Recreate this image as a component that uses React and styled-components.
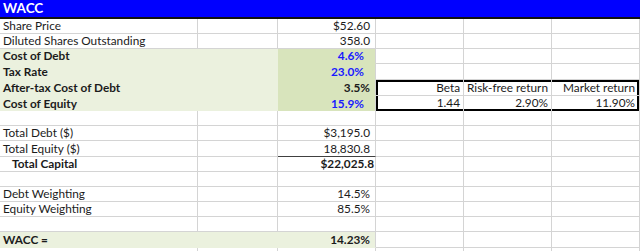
import React from "react";
import styled, { createGlobalStyle } from "styled-components";

const Global = createGlobalStyle`
  html, body { margin: 0; padding: 0; background: #fff; }
  body { font-family: Lato, "Open Sans", "Liberation Sans", sans-serif; }
`;

const GRID = "#d4d4d4";
const LIGHT = "#ebf1de";
const DARK = "#d8e4bc";

const Sheet = styled.div`
  width: 640px;
  height: 251px;
  overflow: hidden;
  background: #fff;
  display: flex;
  flex-direction: column;
`;

const Header = styled.div`
  box-sizing: border-box;
  height: 19px;
  flex: none;
  background: #0000ff;
  border-bottom: 2px solid #111;
  color: #fff;
  font-weight: 700;
  font-size: 13.5px;
  display: flex;
  align-items: flex-end;
  padding: 0 0 1px 3px;
`;

const Row = styled.div`
  display: grid;
  grid-template-columns: 198px 80px 98px 88px 88px 88px 1fr;
  height: ${(p) => p.$h}px;
  flex: none;
`;

const Cell = styled.div`
  box-sizing: border-box;
  display: flex;
  align-items: flex-end;
  justify-content: ${(p) => (p.$right ? "flex-end" : "flex-start")};
  padding: 0 ${(p) => p.$pr ?? 3}px 1px ${(p) => p.$pl ?? 3}px;
  background: ${(p) => p.$bg || "#fff"};
  border-right: 1px solid ${(p) => (p.$noRight ? p.$bg || "#fff" : GRID)};
  border-bottom: 1px solid
    ${(p) => (p.$under ? "#404040" : p.$noBottom ? p.$bg || "#fff" : GRID)};
  font-size: 11.8px;
  line-height: 13px;
  white-space: nowrap;
  font-weight: ${(p) => (p.$bold ? 700 : 400)};
  color: ${(p) => p.$color || "#1b1b1b"};
  box-shadow: ${(p) =>
    p.$box
      ? p.$box
          .split("")
          .map(
            (e) =>
              ({
                t: "inset 0 2px 0 #000",
                b: "inset 0 -2px 0 #000",
                l: "inset 2px 0 0 #000",
                r: "inset -2px 0 0 #000",
              })[e]
          )
          .join(", ")
      : "none"};
  ${(p) => (p.$box && p.$box.includes("b") ? "padding-bottom: 2px;" : "")}
`;

const Empty = ({ n = 1, ...rest }) =>
  Array.from({ length: n }).map((_, i) => <Cell key={i} {...rest} />);

const Plain = ({ h, label, value, bold, pl, pr, under }) => (
  <Row $h={h}>
    <Cell $bold={bold} $pl={pl}>{label}</Cell>
    <Cell />
    <Cell $right $bold={bold} $pr={pr ?? 5} $under={under}>{value}</Cell>
    <Empty n={4} />
  </Row>
);

const GreenRow = ({ h, label, value, blue, tail }) => (
  <Row $h={h}>
    <Cell $bg={LIGHT} $noRight $noBottom $bold>{label}</Cell>
    <Cell $bg={LIGHT} $noRight $noBottom />
    <Cell
      $bg={DARK}
      $noBottom
      $right
      $bold
      $pr={blue ? 11 : 5}
      $color={blue ? "#1a1aff" : "#1b1b1b"}
    >
      {value}
    </Cell>
    {tail || <Empty n={4} />}
  </Row>
);

export default function App() {
  return (
    <>
      <Global />
      <Sheet>
        <Header>WACC</Header>
        <Plain h={15} label="Share Price" value="$52.60" />
        <Plain h={15} label="Diluted Shares Outstanding" value="358.0" />
        <GreenRow h={15} label="Cost of Debt" value="4.6%" blue />
        <GreenRow h={16} label="Tax Rate" value="23.0%" blue />
        <GreenRow
          h={16}
          label="After-tax Cost of Debt"
          value="3.5%"
          tail={
            <>
              <Cell $right $box="tl">Beta</Cell>
              <Cell $right $box="t">Risk-free return</Cell>
              <Cell $right $box="tr" $pr={4}>Market return</Cell>
              <Cell />
            </>
          }
        />
        <GreenRow
          h={15}
          label="Cost of Equity"
          value="15.9%"
          blue
          tail={
            <>
              <Cell $right $box="bl">1.44</Cell>
              <Cell $right $box="b">2.90%</Cell>
              <Cell $right $box="br" $pr={4}>11.90%</Cell>
              <Cell />
            </>
          }
        />
        <Plain h={15} />
        <Plain h={15} label="Total Debt ($)" value="$3,195.0" />
        <Plain h={16} label="Total Equity ($)" value="18,830.8" under />
        <Plain h={15} label="Total Capital" value="$22,025.8" bold pl={12} pr={1} />
        <Plain h={15} />
        <Plain h={15} label="Debt Weighting" value="14.5%" />
        <Plain h={15} label="Equity Weighting" value="85.5%" />
        <Plain h={15} />
        <Row $h={16}>
          <Cell $bg={LIGHT} $noRight $noBottom $bold>WACC =</Cell>
          <Cell $bg={LIGHT} $noRight $noBottom />
          <Cell $bg={LIGHT} $noBottom $right $bold $pr={5}>14.23%</Cell>
          <Empty n={4} />
        </Row>
        <Plain h={15} />
      </Sheet>
    </>
  );
}
